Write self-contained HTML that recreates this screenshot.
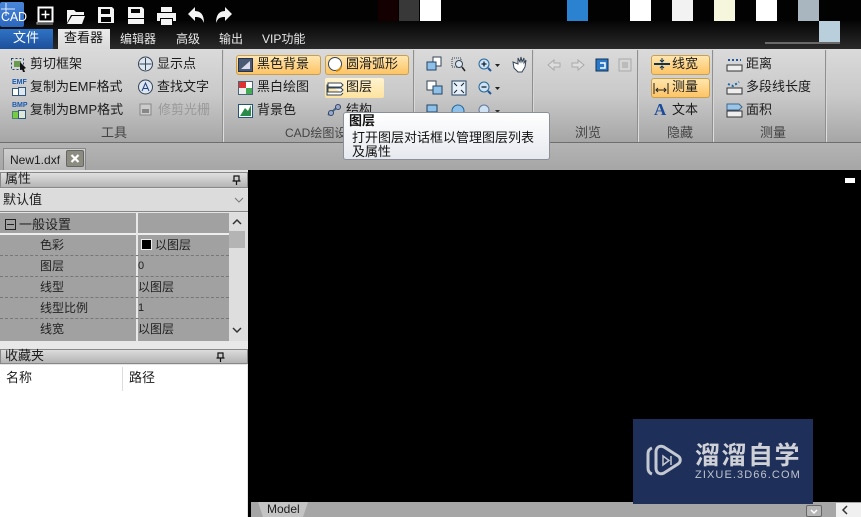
<!DOCTYPE html>
<html><head><meta charset="utf-8">
<style>
html,body{margin:0;padding:0}
body{width:861px;height:517px;overflow:hidden;background:#000;position:relative;font-family:"Liberation Sans","Noto Sans CJK SC",sans-serif;font-size:13px;color:#1c1c1c}
div,span,svg{position:absolute}
.t{white-space:nowrap;line-height:16px}
.w{color:#e8e8e8;font-size:12px}
.sep{top:50px;width:2px;height:92px;background:linear-gradient(#d0d0d0,#dedede);border-left:1px solid #8f8f8f;box-sizing:border-box}
.btn{border:1px solid #c9a050;border-radius:3px;background:linear-gradient(#ffe6ae,#fdc465);box-sizing:border-box}
.gl{color:#444;font-size:13px}
.dash{left:0;width:229px;height:0;border-top:1px dashed #777}
.g{color:#222;font-size:12px}
.mini{font:bold 7px/8px "Liberation Sans",sans-serif;color:#1a5ab0;white-space:nowrap}
</style></head><body>
<!-- top bar -->
<div style="left:0;top:0;width:861px;height:21px;background:#020202"></div>
<div style="left:0;top:21px;width:861px;height:28px;background:linear-gradient(#050505,#2a2a2a)"></div>
<div style="left:378px;top:0;width:20px;height:21px;background:#140000"></div>
<div style="left:399px;top:0;width:20px;height:21px;background:#383838"></div>
<div style="left:420px;top:0;width:21px;height:21px;background:#fff"></div>
<div style="left:567px;top:0;width:21px;height:21px;background:#2a82d0"></div>
<div style="left:630px;top:0;width:21px;height:21px;background:#fff"></div>
<div style="left:672px;top:0;width:21px;height:21px;background:#f2f2f2"></div>
<div style="left:714px;top:0;width:21px;height:21px;background:#f6f6dc"></div>
<div style="left:756px;top:0;width:21px;height:21px;background:#fff"></div>
<div style="left:798px;top:0;width:21px;height:21px;background:#a9b6c0"></div>
<div style="left:819px;top:21px;width:21px;height:21px;background:#b9d0dc"></div>
<div style="left:765px;top:42px;width:75px;height:2px;background:#999;opacity:.6"></div>
<!-- logo -->
<div style="left:0;top:2px;width:24px;height:25px;background:linear-gradient(#4a86d8,#2a66bc);border-radius:2px"></div>
<svg style="left:0;top:2px" width="24" height="25"><path d="M6 1v13M1 7h14" stroke="#dfeaff" stroke-width="1"/></svg>
<div class="t" style="left:1px;top:10px;color:#fff;font-size:12.500px;line-height:15px;letter-spacing:-.2px">CAD</div>
<!-- QAT icons -->
<svg style="left:36px;top:5px" width="200" height="22" viewBox="0 0 200 22" fill="#f4f4f4">
<rect x="2.500" y="2.500" width="14" height="14" fill="#000" stroke="#fff" stroke-width="2"/><path d="M9.500 5.500v8M5.500 9.500h8" stroke="#fff" stroke-width="1.500"/><path d="M1 17v2h16" stroke="#aaa" fill="none"/>
<path d="M31 5h7l2 2h8v3H35l-4 8zM36 11h13l-3 8H31z"/>
<path d="M62 2h14l2 2v14H62zM65 4v5h9V4zM65 12v5h10v-5z" fill-rule="evenodd"/>
<path d="M92 2h14l2 2v9H92zM95 4v4h9V4z" fill-rule="evenodd"/><rect x="92" y="14" width="16" height="5"/>
<path d="M125 2h11v5h-11zM121 8h19v8h-3v-3h-13v3h-3zM125 14h11v6h-11z"/>
<path d="M152 9l7-7v4c6 0 9 4 9 12c-2-5-4-6-9-6v4z"/>
<path d="M196 9l-7-7v4c-6 0-9 4-9 12c2-5 4-6 9-6v4z"/>
</svg>
<!-- tabs -->
<div style="left:0;top:29px;width:53px;height:20px;background:linear-gradient(#2f73c6,#1c4f9a)"></div>
<div class="t" style="left:13px;top:30px;color:#fff;font-size:13px">文件</div>
<div style="left:58px;top:29px;width:52px;height:21px;background:linear-gradient(#ececec,#d8d8d8)"></div>
<div class="t" style="left:64px;top:30px;color:#111;font-size:13px">查看器</div>
<div class="t w" style="left:120px;top:31px">编辑器</div>
<div class="t w" style="left:176px;top:31px">高级</div>
<div class="t w" style="left:219px;top:31px">输出</div>
<div class="t w" style="left:262px;top:31px">VIP功能</div>
<!-- ribbon -->
<div style="left:0;top:49px;width:861px;height:94px;background:linear-gradient(#dadada,#c9c9c9 50%,#a6a6a6);border-bottom:1px solid #6e6e6e;box-sizing:border-box"></div>
<div class="sep" style="left:222px"></div><div class="sep" style="left:413px"></div><div class="sep" style="left:532px"></div><div class="sep" style="left:637px"></div><div class="sep" style="left:712px"></div><div class="sep" style="left:825px"></div>
<!-- strip -->
<div style="left:0;top:143px;width:861px;height:27px;background:linear-gradient(#b4b4b4,#a6a6a6)"></div>
<!-- hover buttons -->
<div class="btn" style="left:236px;top:55px;width:85px;height:20px"></div>
<div class="btn" style="left:325px;top:55px;width:84px;height:20px"></div>
<div style="left:325px;top:78px;width:59px;height:20px;background:linear-gradient(#fff3cf,#fde3a0);border-radius:2px"></div>
<div class="btn" style="left:651px;top:55px;width:59px;height:20px"></div>
<div class="btn" style="left:651px;top:78px;width:59px;height:20px"></div>
<!-- ribbon texts -->
<div class="t" style="left:30px;top:56px">剪切框架</div>
<div class="t" style="left:30px;top:79px">复制为EMF格式</div>
<div class="t" style="left:30px;top:102px">复制为BMP格式</div>
<div class="t" style="left:157px;top:56px">显示点</div>
<div class="t" style="left:157px;top:79px">查找文字</div>
<div class="t" style="left:158px;top:102px;color:#999">修剪光栅</div>
<div class="t gl" style="left:101px;top:125px">工具</div>
<div class="t" style="left:257px;top:56px">黑色背景</div>
<div class="t" style="left:257px;top:79px">黑白绘图</div>
<div class="t" style="left:257px;top:102px">背景色</div>
<div class="t" style="left:346px;top:56px">圆滑弧形</div>
<div class="t" style="left:346px;top:79px">图层</div>
<div class="t" style="left:346px;top:102px">结构</div>
<div class="t gl" style="left:285px;top:125px;font-size:12px">CAD绘图设置</div>
<div class="t gl" style="left:575px;top:125px">浏览</div>
<div class="t" style="left:672px;top:56px">线宽</div>
<div class="t" style="left:672px;top:79px">测量</div>
<div class="t" style="left:672px;top:102px">文本</div>
<div class="t gl" style="left:667px;top:125px">隐藏</div>
<div class="t" style="left:746px;top:56px">距离</div>
<div class="t" style="left:746px;top:79px">多段线长度</div>
<div class="t" style="left:746px;top:102px">面积</div>
<div class="t gl" style="left:760px;top:125px">测量</div>
<div class="mini" style="left:12px;top:79px">EMF</div>
<div class="mini" style="left:12px;top:102px">BMP</div>
<!-- ribbon icons -->
<svg style="left:0;top:50px" width="861" height="92" viewBox="0 50 861 92" fill="none">
<rect x="11.500" y="58.500" width="12" height="11" stroke="#246" stroke-dasharray="2 2"/><rect x="14" y="61" width="7" height="6" fill="#6a9a50"/><path d="M20 62l6 6-2 1 1 3-2 0-1-3-2 1z" fill="#111"/>
<rect x="12.500" y="88.500" width="7" height="7" fill="#fff" stroke="#357"/><rect x="18.500" y="87.500" width="7" height="8" fill="#dde8f0" stroke="#357"/>
<rect x="12.500" y="111.500" width="7" height="7" fill="#7c4" stroke="#486"/><rect x="18.500" y="110.500" width="7" height="8" fill="#dde8d8" stroke="#357"/>
<circle cx="145.500" cy="64" r="7" fill="#dde6f0" stroke="#345"/><path d="M145.500 58v12M139.500 64h12" stroke="#345"/>
<circle cx="145.500" cy="87" r="7" fill="#dde6f0" stroke="#345"/><path d="M142 91l3.500-8 3.500 8M143 88.500h5" stroke="#248"/>
<rect x="140" y="104" width="11" height="11" fill="#ccc" stroke="#888"/><rect x="142" y="109" width="7" height="4" fill="#888"/>
<rect x="238.500" y="58.500" width="14" height="13" fill="#4a5a70" stroke="#235"/><path d="M241 69l9-8v8z" fill="#dde"/>
<rect x="238.500" y="81.500" width="14" height="13" fill="#fff" stroke="#467"/><rect x="239" y="82" width="7" height="6" fill="#d33"/><rect x="246" y="88" width="6" height="6" fill="#4a5"/><rect x="239" y="88" width="7" height="6" fill="#eee"/>
<rect x="238.500" y="104.500" width="14" height="13" fill="#fff" stroke="#257"/><path d="M240 116l5-8 3 3 3-6v11z" fill="#2a8a4a"/>
<circle cx="335" cy="64" r="6.500" fill="#fff" stroke="#345"/><path d="M341 67a7 7 0 0 1-5 4" stroke="#cf8a10" stroke-width="2"/>
<path d="M328 83h13l2 2-2 2H328zM328 88h13l2 2-2 2H328zM328 85h-1v10h14l2-2" stroke="#345" fill="#fff"/>
<path d="M328 115l12-10" stroke="#468" stroke-width="2"/><circle cx="331" cy="113" r="2.500" fill="#9ac" stroke="#346"/><circle cx="338" cy="107" r="2.500" fill="#9ac" stroke="#346"/>
<!-- zoom group -->
<rect x="433" y="57" width="8" height="9" fill="#fff" stroke="#345"/><rect x="427" y="62" width="9" height="8" fill="#8fc0e8" stroke="#246"/>
<rect x="452" y="58" width="9" height="9" stroke="#345" stroke-dasharray="1 1"/><circle cx="459" cy="64" r="3.500" fill="#dfe8f0" stroke="#345"/><path d="M462 67l3 4" stroke="#222" stroke-width="1.500"/>
<circle cx="484" cy="64" r="5" fill="#cfe2f4" stroke="#269"/><path d="M481.500 64h5M484 61.500v5" stroke="#123" stroke-width="1.300"/><path d="M488 68l3 3" stroke="#259" stroke-width="2"/><path d="M495 64h5l-2.500 3z" fill="#222"/>
<path d="M513 62l1 6 4 4h4l3-5 1-7-2 3v-5l-2 4-1-5-1 5-2-4 0 6z" fill="#fff" stroke="#345"/>
<rect x="427" y="81" width="9" height="9" fill="#fff" stroke="#345"/><rect x="433" y="86" width="9" height="8" fill="#8fc0e8" stroke="#246"/>
<rect x="452" y="81" width="14" height="14" fill="#e8f0f8" stroke="#246"/><path d="M454 83l3 3M464 83l-3 3M454 93l3-3M464 93l-3-3" stroke="#123"/>
<circle cx="484" cy="87" r="5" fill="#cfe2f4" stroke="#269"/><path d="M481.500 87h5" stroke="#123" stroke-width="1.300"/><path d="M488 91l3 3" stroke="#259" stroke-width="2"/><path d="M495 87h5l-2.500 3z" fill="#222"/>
<rect x="427" y="105" width="10" height="7" fill="#8fc0e8" stroke="#246"/><circle cx="458" cy="111" r="6" fill="#8fc0e8" stroke="#269"/><circle cx="484" cy="110" r="5" fill="#cfe2f4" stroke="#679"/><path d="M495 110h5l-2.500 3z" fill="#333"/>
<!-- browse -->
<path d="M548 65l6-5v3h6v4h-6v3z" fill="#ddd" stroke="#aaa"/>
<path d="M584 65l-6-5v3h-6v4h6v3z" fill="#ddd" stroke="#aaa"/>
<rect x="596" y="59" width="12" height="12" fill="#2a78c8" stroke="#135"/><path d="M600 63h5v5l-5 0" stroke="#fff" stroke-width="1.500"/>
<rect x="619" y="59" width="12" height="12" fill="#d4d4d4" stroke="#aaa"/><rect x="622" y="62" width="6" height="6" fill="#bbb"/>
<!-- hide -->
<path d="M654 64h16" stroke="#135" stroke-width="2"/><path d="M662 58v4M660 60l2 2 2-2M662 70v-4M660 68l2-2 2 2" stroke="#135"/>
<path d="M654 83v11M668 83v11M656 90h10M658 88l-2 2 2 2M664 88l2 2-2 2" stroke="#222"/>
<!-- measure -->
<rect x="727" y="65" width="15" height="6" fill="#eee" stroke="#333"/><path d="M728 60h13" stroke="#259" stroke-width="2" stroke-dasharray="2 2"/>
<rect x="727" y="88" width="15" height="6" fill="#eee" stroke="#333"/><path d="M728 84l5 2 6-4" stroke="#16a" stroke-width="2" stroke-dasharray="2 2"/>
<rect x="727" y="111" width="15" height="6" fill="#eee" stroke="#333"/><path d="M727 104h12l3 3-3 3h-12z" fill="#9ac4e8" stroke="#468"/>
</svg>
<div class="t" style="left:654px;top:100px;color:#1a4a9a;font:bold 17px/20px 'Liberation Serif',serif">A</div>
<!-- tooltip -->
<div style="left:343px;top:112px;width:207px;height:48px;background:linear-gradient(#fff,#e6e9ef);border:1px solid #8a8f98;border-radius:3px;box-sizing:border-box"></div>
<div class="t" style="left:349px;top:113px;font-weight:bold;color:#111">图层</div>
<div class="t" style="left:352px;top:130px;color:#111">打开图层对话框以管理图层列表</div>
<div class="t" style="left:352px;top:144px;color:#111">及属性</div>
<!-- doc tab -->
<div style="left:3px;top:148px;width:83px;height:22px;background:linear-gradient(#cfcfcf,#b8b8b8);border:1px solid #888;border-bottom:none;box-sizing:border-box"></div>
<div class="t" style="left:10px;top:152px;font-size:12px">New1.dxf</div>
<div style="left:66px;top:150px;width:18px;height:17px;background:#8c8c80;border:1px solid #666;border-radius:2px;box-sizing:border-box"></div>
<svg style="left:70px;top:154px" width="10" height="9"><path d="M1.500 1l7 7M8.500 1l-7 7" stroke="#fff" stroke-width="2.200"/></svg>
<!-- left panel -->
<div style="left:0;top:170px;width:248px;height:347px;background:#e4e4e4"></div>
<div style="left:248px;top:170px;width:3px;height:347px;background:#000"></div>
<div style="left:0;top:172px;width:248px;height:16px;background:linear-gradient(#e0e0e0,#b4b4b4);border:1px solid #888;box-sizing:border-box"></div>
<div class="t" style="left:5px;top:171px">属性</div>
<svg style="left:232px;top:175px" width="9" height="11"><path d="M2 1h5v5H2zM0.500 6h8M4.500 6v4" stroke="#111" stroke-width="1.200" fill="none"/></svg>
<div style="left:0;top:189px;width:248px;height:23px;background:#dcdcdc;border-bottom:1px solid #888;box-sizing:border-box"></div>
<div class="t" style="left:3px;top:192px">默认值</div>
<svg style="left:234px;top:197px" width="10" height="7"><path d="M1 1l4 4 4-4" stroke="#777" fill="none"/></svg>
<div style="left:0;top:213px;width:229px;height:128px;background:#a1a1a1"></div>
<div style="left:229px;top:213px;width:19px;height:128px;background:#dedede"></div>
<div style="left:229px;top:231px;width:16px;height:17px;background:#b4b4b4"></div>
<svg style="left:232px;top:218px" width="12" height="120" fill="none" stroke="#333" stroke-width="1.500"><path d="M1 6l4-4 4 4M1 110l4 4 4-4"/></svg>
<div style="left:0;top:233px;width:229px;height:2px;background:#eee"></div>
<div style="left:136px;top:213px;width:2px;height:128px;background:#e8e8e8"></div>
<div class="dash" style="top:255px"></div><div class="dash" style="top:276px"></div><div class="dash" style="top:297px"></div><div class="dash" style="top:318px"></div>
<div style="left:5px;top:219px;width:11px;height:11px;border:1px solid #222;box-sizing:border-box"></div>
<div style="left:7px;top:224px;width:7px;height:1px;background:#222"></div>
<div class="t g" style="left:19px;top:217px;font-size:13px">一般设置</div>
<div class="t g" style="left:40px;top:237px">色彩</div>
<div class="t g" style="left:40px;top:258px">图层</div>
<div class="t g" style="left:40px;top:279px">线型</div>
<div class="t g" style="left:40px;top:300px">线型比例</div>
<div class="t g" style="left:40px;top:321px">线宽</div>
<div style="left:141px;top:239px;width:11px;height:11px;background:#000;border:1px solid #eee;box-sizing:border-box"></div>
<div class="t g" style="left:155px;top:237px">以图层</div>
<div class="t g" style="left:138px;top:258px;font-size:11px">0</div>
<div class="t g" style="left:138px;top:279px">以图层</div>
<div class="t g" style="left:138px;top:300px;font-size:11px">1</div>
<div class="t g" style="left:138px;top:321px">以图层</div>
<div style="left:0;top:341px;width:248px;height:8px;background:#e8e8e8"></div>
<div style="left:0;top:349px;width:248px;height:15px;background:linear-gradient(#dcdcdc,#b4b4b4);border:1px solid #888;box-sizing:border-box"></div>
<div class="t" style="left:5px;top:348px">收藏夹</div>
<svg style="left:216px;top:352px" width="9" height="11"><path d="M2 1h5v5H2zM0.500 6h8M4.500 6v4" stroke="#111" stroke-width="1.200" fill="none"/></svg>
<div style="left:0;top:365px;width:247px;height:152px;background:#fff"></div>
<div style="left:122px;top:367px;width:1px;height:24px;background:#ddd"></div>
<div class="t" style="left:6px;top:370px">名称</div>
<div class="t" style="left:129px;top:370px">路径</div>
<!-- canvas bits -->
<div style="left:845px;top:178px;width:10px;height:5px;background:#fff"></div>
<div style="left:251px;top:502px;width:610px;height:15px;background:#a6a6a6"></div>
<div style="left:258px;top:502px;width:50px;height:15px;background:#c4c4c4;clip-path:polygon(0 0,100% 0,90% 100%,10% 100%)"></div>
<div class="t" style="left:267px;top:502px;font-size:12px;line-height:15px">Model</div>
<div style="left:806px;top:505px;width:16px;height:12px;background:#b5b5b5;border:1px solid #666;border-radius:2px;box-sizing:border-box"></div>
<svg style="left:810px;top:509px" width="8" height="6"><path d="M1 1l3 3 3-3" stroke="#fff" stroke-width="1.500" fill="none"/></svg>
<div style="left:836px;top:503px;width:25px;height:14px;background:#f0f0f0"></div>
<svg style="left:841px;top:505px" width="8" height="10"><path d="M6 1L2 5l4 4" stroke="#333" stroke-width="1.500" fill="none"/></svg>
<!-- watermark -->
<div style="left:633px;top:419px;width:180px;height:85px;background:#1e2f5a"></div>
<svg style="left:645px;top:440px" width="40" height="42" fill="none" stroke="#c4c8d0" stroke-width="3"><path d="M11 12c0-5 4-7 8-5l14 9c3 2 3 6 0 8l-14 9c-4 2-8 0-8-5z"/><path d="M7 8c-3 1-4 3-4 6v14c0 3 1 5 4 6"/><path d="M18 16v9l6-4.500zM26 16v9" stroke-width="1.500"/></svg>
<div class="t" style="left:695px;top:441px;color:#cfd1d7;font-size:25px;font-weight:bold;line-height:30px;letter-spacing:1.500px">溜溜自学</div>
<div class="t" style="left:695px;top:468px;color:#c0c4cc;font-size:11px;line-height:14px;letter-spacing:1.100px">ZIXUE.3D66.COM</div>
</body></html>
